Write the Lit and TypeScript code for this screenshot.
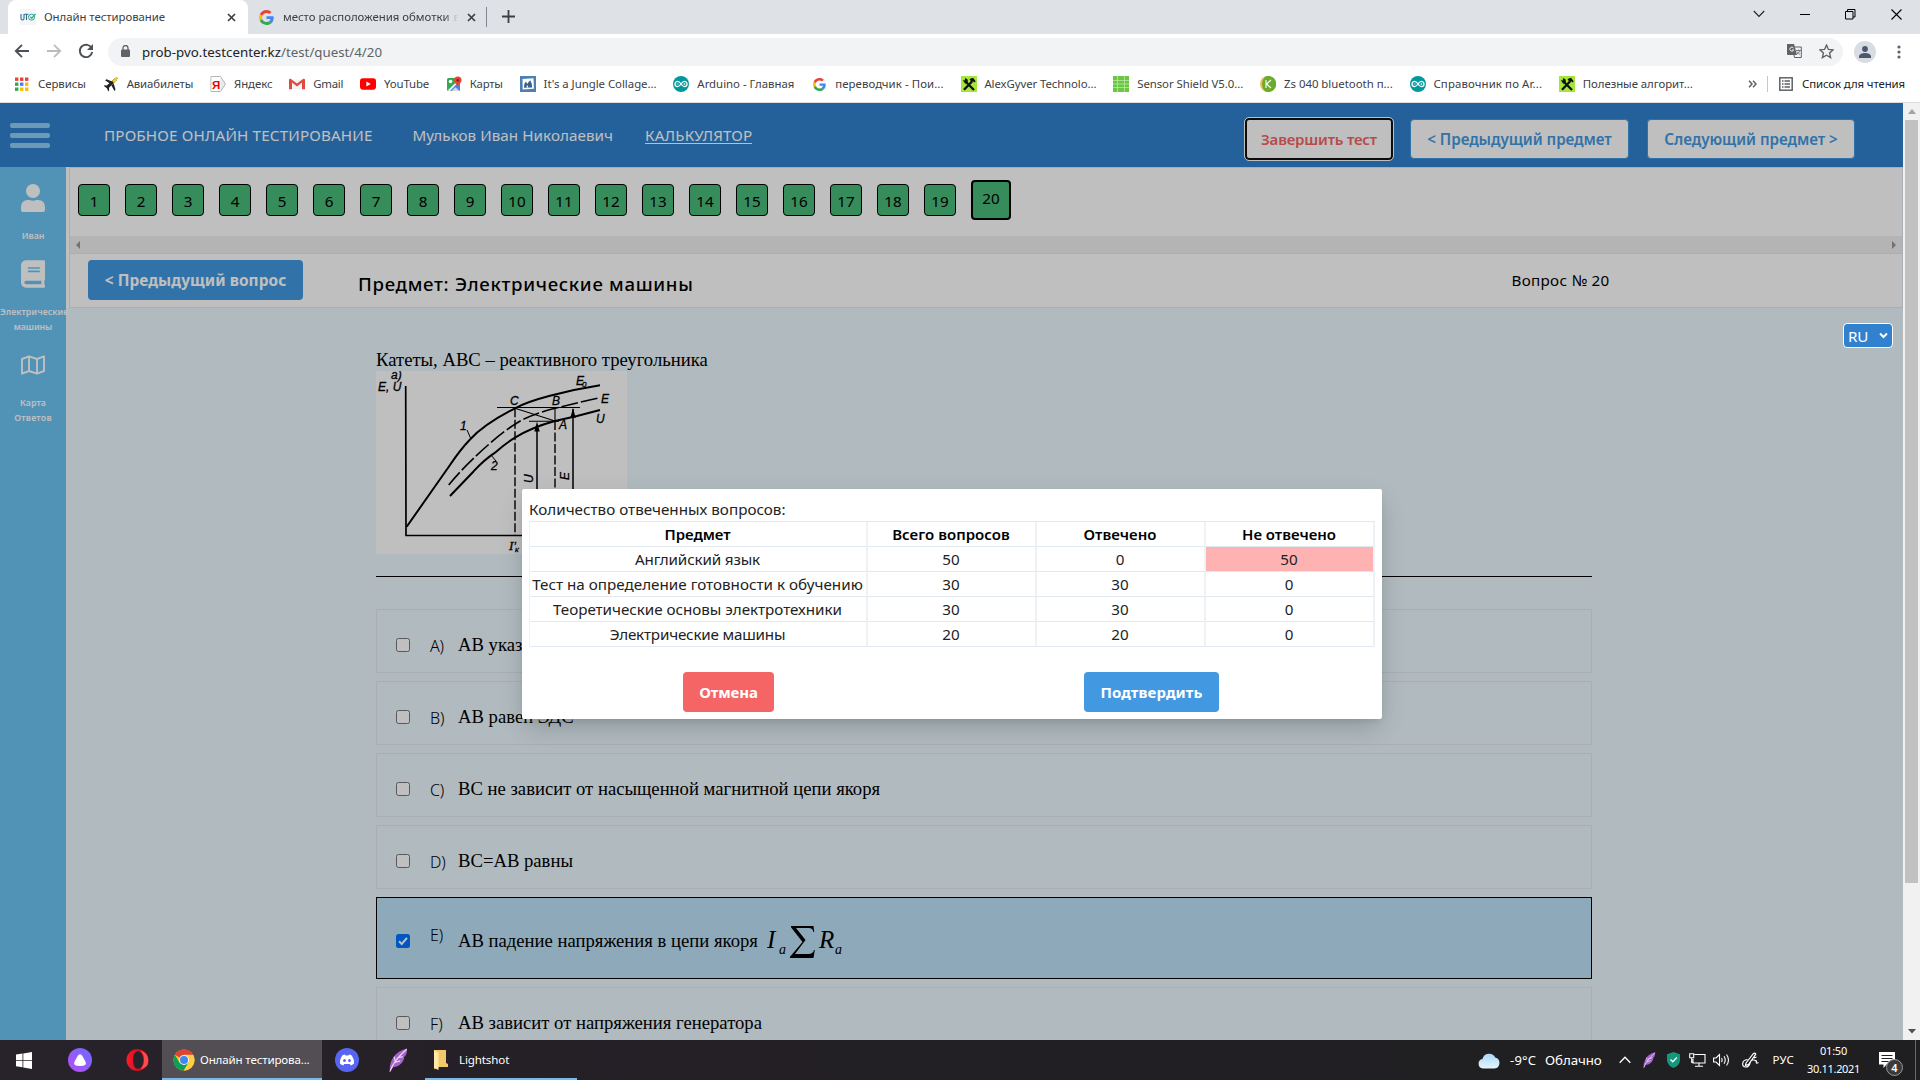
import { LitElement, html, css, svg, nothing } from 'lit';
import { customElement } from 'lit/decorators.js';

const UI_FONT = '"Noto Sans"';
const pen = document.createElement('canvas').getContext('2d')!;

/** Sets a line of text to an exact width by spreading the difference over its letters. */
const fit = (text: string, width: number, size: number, weight = 400) => {
  pen.font = `${weight} ${size}px ${UI_FONT}`;
  const ls = (width - pen.measureText(text).width) / text.length;
  return html`<span
    style="display:inline-block;white-space:pre;flex:none;font-size:${size}px;font-weight:${weight};width:${width}px;letter-spacing:${ls.toFixed(3)}px"
    >${text}</span
  >`;
};

const icon = (w: number, h: number, vb: string, body: unknown) =>
  html`<svg width=${w} height=${h} viewBox=${vb} style="display:block;flex:none">${body}</svg>`;

const google = (s = 16) =>
  icon(s, s, '0 0 48 48', svg`
    <path fill="#EA4335" d="M24 9.5c3.54 0 6.71 1.22 9.21 3.6l6.85-6.85C35.9 2.38 30.47 0 24 0 14.62 0 6.51 5.38 2.56 13.22l7.98 6.19C12.43 13.72 17.74 9.5 24 9.5z"/>
    <path fill="#4285F4" d="M46.98 24.55c0-1.57-.15-3.09-.38-4.55H24v9.02h12.94c-.58 2.96-2.26 5.48-4.78 7.18l7.73 6c4.51-4.18 7.09-10.36 7.09-17.65z"/>
    <path fill="#FBBC05" d="M10.53 28.59c-.48-1.45-.76-2.99-.76-4.59s.27-3.14.76-4.59l-7.98-6.19C.92 16.46 0 20.12 0 24c0 3.88.92 7.54 2.56 10.78l7.97-6.19z"/>
    <path fill="#34A853" d="M24 48c6.48 0 11.93-2.13 15.89-5.81l-7.73-6c-2.15 1.45-4.92 2.3-8.16 2.3-6.26 0-11.57-4.22-13.47-9.91l-7.98 6.19C6.51 42.62 14.62 48 24 48z"/>`);

const icons: Record<string, () => unknown> = {
  apps: () => icon(16, 16, '0 0 16 16', svg`
    ${[['#ea4335', '#ea4335', '#ea4335'], ['#34a853', '#4285f4', '#fbbc05'], ['#34a853', '#fbbc05', '#fbbc05']].map((r, y) =>
      r.map((c, x) => svg`<rect x=${1 + x * 5} y=${1.5 + y * 5} width="3.4" height="3.4" fill=${c}></rect>`))}`),
  plane: () => icon(16, 16, '0 0 16 16', svg`
    <path d="M2 4.2l1.6-.9L9 5.5l-2 2zM8.4 9.5l2.2-2.2 1.9 6.3-1 1.3z" fill="#222"/>
    <path d="M1.2 9.2l2.6.3L11.6 2.5q2-1.4 2.6-.8.7.7-.6 2.6L6 11.8l.2 2.8-1 .6-1.3-2.9-2.7-2.1z" fill="#222"/>
    <path d="M9 5L11.8 2.4q1.8-1.2 2.4-.7.6.6-.6 2.4L11 6.9z" fill="#fdd216"/>`),
  yandex: () => icon(16, 16, '0 0 16 16', svg`
    <path d="M1 .5h9.500l5 7.5-5 7.500H1z" fill="#e9e9e9" stroke="#b5b5b5"/><rect x="1.5" y="1" width="9" height="14" fill="#fff"/>
    <text x="2" y="12.5" font-family="Liberation Sans" font-weight="700" font-size="11.5" fill="#e00">Я</text>`),
  gmail: () => icon(16, 16, '0 0 16 16', svg`
    <path d="M1 3.5h14v9.5H1z" fill="#f3f3f3"/><path d="M0 4v9.3h3V6.5l5 4 5-4v6.8h3V4q0-1.6-1.6-1.3L8 7.5 1.6 2.7Q0 2.4 0 4z" fill="#dd4b3e"/>`),
  youtube: () => icon(16, 16, '0 0 17 16', svg`
    <rect x="0" y="2" width="17" height="12" rx="3" fill="#f00"/><path d="M6.8 5.4L11.4 8l-4.6 2.6z" fill="#fff"/>`),
  maps: () => icon(16, 16, '0 0 16 16', svg`
    <rect x="1" y="2" width="13" height="13" rx="1.5" fill="#34a853"/><path d="M3 15L13.9 5v8.5q0 1.5-1.5 1.5z" fill="#4285f4"/>
    <path d="M1.5 14.5L13 3.5l1 1L4 15z" fill="#f4f4f4"/><path d="M5.5 15l4-3.7 4 3.7z" fill="#dadada"/>
    <circle cx="4.5" cy="5.5" r="1.8" fill="#fff"/>
    <path d="M11.8.5a3.7 3.7 0 0 1 3.7 3.7c0 2.5-2.6 3.6-3.7 6.8-1.1-3.2-3.7-4.3-3.7-6.8A3.7 3.7 0 0 1 11.8.5z" fill="#ea4335"/><circle cx="11.8" cy="4.2" r="1.3" fill="#8e1b12"/>`),
  jungle: () => icon(16, 16, '0 0 16 16', svg`
    <rect width="16" height="16" fill="#4c7fb5"/><path d="M2.5 3l11-.7.4 10.5-11.2.8z" fill="#fff"/>
    <path d="M4 11.8l.4-4L6 5.5l1.2 2.6L8.6 6l1.6-1.8 1.6 3.6.3 3.7z" fill="#3a5f8e"/><path d="M6.5 11.6l.4-2.2h1l.3 2.1z" fill="#fff"/>`),
  arduino: () => icon(16, 16, '0 0 16 16', svg`
    <circle cx="8" cy="8" r="8" fill="#00979d"/><path d="M8 8C6.6 5.9 5.8 5.4 4.6 5.4a2.6 2.6 0 0 0 0 5.2C5.8 10.6 6.6 10 8 8zm0 0c1.4-2.1 2.2-2.6 3.4-2.6a2.6 2.6 0 0 1 0 5.2C10.200 10.600 9.400 10 8 8z" fill="none" stroke="#fff" stroke-width="1.3"/>
    <path d="M3.700 8h1.800M10.500 8h1.800M11.400 7.100v1.800" stroke="#fff" stroke-width=".7"/>`),
  google: () => html`<div class="ic16">${google(13)}</div>`,
  alex: () => icon(16, 16, '0 0 16 16', svg`
    <rect width="16" height="16" fill="#a4e73a"/><path d="M4.500 5.500L13 14M11.200 5.200L3 13.800" stroke="#111" stroke-width="2.300"/>
    <path d="M1.700 4l2.100.500.300-2.500 2.500 1.500.300 2.800-2.700 1.500zM8.500 3l3.500-1.200 2.700 3.500-1.500 1.200-1-1.200-1.700 1z" fill="#111"/>`),
  sensor: () => icon(16, 16, '0 0 16 16', svg`
    <rect width="16" height="16" fill="#6cc644"/><path d="M0 4.500h16M0 8h16M0 11.500h16M4.500 0v16M11.500 0v16" stroke="#b9eaa0" stroke-width=".8"/>`),
  ki: () => icon(16, 16, '0 0 16 16', svg`
    <circle cx="8" cy="8" r="8" fill="#f0b95c"/><path d="M5 .700A8 8 0 1 1 5 15.300Q2 12 2 8T5 .700z" fill="#6aac2c"/>
    <path d="M6 4v8M11 4L6.600 8 11 12" fill="none" stroke="#fff" stroke-width="1.100"/>`),
};

const bookmarks: [string, string, number][] = [
  ['apps', 'Сервисы', 48], ['plane', 'Авиабилеты', 66.5], ['yandex', 'Яндекс', 38.5], ['gmail', 'Gmail', 30],
  ['youtube', 'YouTube', 45], ['maps', 'Карты', 33], ['jungle', "It's a Jungle Collage...", 113],
  ['arduino', 'Arduino - Главная', 97], ['google', 'переводчик - Пои...', 108.5], ['alex', 'AlexGyver Technolo...', 112],
  ['sensor', 'Sensor Shield V5.0...', 106], ['ki', 'Zs 040 bluetooth п...', 108.7], ['arduino', 'Справочник по Ar...', 108.6],
  ['alex', 'Полезные алгорит...', 110],
];

const subjects: [string, number, number, number, number][] = [
  ['Английский язык', 125, 50, 0, 50],
  ['Тест на определение готовности к обучению', 330.6, 30, 30, 0],
  ['Теоретические основы электротехники', 289, 30, 30, 0],
  ['Электрические машины', 175.6, 20, 20, 0],
];

const answers: [string, string][] = [
  ['A', 'АВ указ'], ['B', 'АВ равен ЭДС'], ['C', 'ВС не зависит от насыщенной магнитной цепи якоря'],
  ['D', 'BC=AB равны'], ['E', 'АВ падение напряжения в цепи якоря'], ['F', 'АВ зависит от напряжения генератора'],
];

const feather = (w: number, h: number) => icon(w, h, '0 0 22 28', svg`
  <path d="M21 .500Q9 3 3.500 13 0 20 1 27.500 3 24.500 5 22.500 13 22 16.500 15 18 12 17.500 10.500L19.500 8.500Q21.500 4 21 .500z" fill="#a463c8"/>
  <path d="M1 27.500Q5 15 20.500 1.500M6 17l7-2M9 12l7-2M7 15l-1-5" stroke="#ecd3f6" stroke-width="1.400" fill="none"/>`);

@customElement('browser-chrome')
class BrowserChrome extends LitElement {
  static styles = css`
    :host { display: block; font-family: "Noto Sans", sans-serif; color: #3c4043; }
    .tabs { height: 34px; background: #dee1e6; display: flex; padding-left: 8px; }
    .tab { display: flex; align-items: center; box-sizing: border-box; line-height: 20px; }
    .on { width: 240px; background: #fff; border-radius: 8px 8px 0 0; padding: 0 12px 0 12px; gap: 8px; }
    .off { width: 239px; padding: 0 9px 0 11px; gap: 9px; border-right: 1px solid #80868b; height: 20px; margin-top: 7px; }
    .grow { flex: 1; }
    .clip { width: 175px; overflow: hidden; white-space: nowrap; display: flex; gap: 4px; -webkit-mask-image: linear-gradient(90deg, #000 92%, transparent); }
    .v { font-size: 11.4px; }
    .plus { margin: 10px 0 0 15px; }
    .win { display: flex; align-items: center; gap: 35px; padding: 0 18px 6px 0; }
    .bar { height: 32px; background: #fff; display: flex; align-items: center; padding-left: 14px; box-sizing: border-box; padding-top: 1px; }
    .nav { display: flex; gap: 16px; width: 94px; flex: none; }
    .omni { flex: 1; height: 28px; border-radius: 14px; background: #f1f3f4; display: flex; align-items: center; padding: 0 9px 2px 13px; margin-top: 3px; line-height: 20px; box-sizing: border-box; }
    .url { margin-left: 12px; display: flex; }
    .host { color: #202124; }
    .path { color: #5f6368; }
    .gap { width: 17px; }
    .ava { width: 22px; height: 22px; border-radius: 50%; background: #d8dce3; margin: 2px 21px 0 11px; display: grid; place-items: center; }
    .dots { margin: 2px 19px 0 0; }
    .marks { height: 36px; background: #fff; display: flex; align-items: center; gap: 16.9px; padding: 0 15px 0 14px; line-height: 18px; border-bottom: 1px solid #dadce0; }
    .mark { display: flex; align-items: center; gap: 7.900px; flex: none; }
    .ic16 { width: 16px; display: grid; place-items: center; }
    .reading { display: flex; align-items: center; border-left: 1px solid #c6c8cb; height: 16px; padding-left: 11px; gap: 9px; margin-left: -7px; color: #202124; }
  `;
  render() {
    const cross = icon(9, 9, '0 0 9 9', svg`<path d="M1 1l7 7M8 1L1 8" stroke="#3c4043" stroke-width="1.700"/>`);
    return html`
      <div class="tabs">
        <div class="tab on">
          ${icon(16, 16, '0 0 16 16', svg`<rect width="16" height="16" fill="#f5f6f7"/><path d="M1 5v4.500q0 1.500 1.500 1.500t1.500-1.500V5M4.500 5.300h4M6.500 5.300V11" stroke="#2b6f96" stroke-width="1.100" fill="none"/><circle cx="11.500" cy="8.200" r="3" fill="none" stroke="#3a9aa0"/><path d="M10.300 7.800l1.400 1.500L15.500 5" stroke="#2fb86a" stroke-width="1.300" fill="none"/>`)}
          ${fit('Онлайн тестирование', 121, 11.4)}<div class="grow"></div>${cross}
        </div>
        <div class="tab off">
          ${google(15)}<div class="clip">${fit('место расположения обмотки', 166.5, 11.4)}<span class="v">в</span></div>${cross}
        </div>
        <div class="plus">${icon(13, 13, '0 0 13 13', svg`<path d="M6.500 0v13M0 6.500h13" stroke="#3c4043" stroke-width="1.800"/>`)}</div>
        <div class="grow"></div>
        <div class="win">
          ${icon(12, 8, '0 0 12 8', svg`<path d="M.800 1l5.200 5.500L11.200 1" fill="none" stroke="#222" stroke-width="1.100"/>`)}
          ${icon(10, 10, '0 0 10 10', svg`<path d="M0 5.500h10" stroke="#000"/>`)}
          ${icon(11, 11, '0 0 11 11', svg`<path d="M.500 2.500h7.500v7.500H.500zM2.500 2.500V.500H10v7.500H8" fill="none" stroke="#000"/>`)}
          ${icon(11, 11, '0 0 11 11', svg`<path d="M.500.500l10 10M10.500.500l-10 10" stroke="#000" stroke-width="1.100"/>`)}
        </div>
      </div>
      <div class="bar">
        <div class="nav">
          ${icon(16, 16, '0 0 16 16', svg`<path d="M15 8H2M8 1.800L1.800 8 8 14.200" fill="none" stroke="#4d5156" stroke-width="1.900"/>`)}
          ${icon(16, 16, '0 0 16 16', svg`<path d="M1 8h13M8 1.800L14.200 8 8 14.200" fill="none" stroke="#babcbe" stroke-width="1.800"/>`)}
          ${icon(16, 16, '0 0 16 16', svg`<path d="M13.800 5.500A6.200 6.200 0 1 0 14.200 9" fill="none" stroke="#4d5156" stroke-width="1.900"/><path d="M15 1v6H9z" fill="#4d5156"/>`)}
        </div>
        <div class="omni">
          ${icon(9, 12, '0 0 9 12', svg`<rect y="4.500" width="9" height="7.500" rx="1" fill="#5f6368"/><path d="M2 5V3a2.500 2.500 0 0 1 5 0v2" fill="none" stroke="#5f6368" stroke-width="1.300"/>`)}
          <div class="url"><span class="host">${fit('prob-pvo.testcenter.kz', 139, 13.3)}</span><span class="path">${fit('/test/quest/4/20', 101, 13.3)}</span></div>
          <div class="grow"></div>
          ${icon(15, 14, '0 0 15 14', svg`<path d="M5.500 3h8.800v10.500H7.500z" fill="#f1f3f4" stroke="#5f6368"/><path d="M0 0h7l3 11H1q-1 0-1-1z" fill="#5f6368"/><path d="M6.500 4A2 2 0 1 0 6.700 6H5" stroke="#fff" fill="none" stroke-width=".9"/><path d="M9 6.500h5M11.500 5.500v1M13 6.500Q12 9 10 10M10 7.500q1 2 3 3" stroke="#5f6368" fill="none" stroke-width=".8"/>`)}
          <span class="gap"></span>
          ${icon(15, 15, '0 0 24 24', svg`<path d="M12 1.800l3.100 6.900 7.500.700-5.700 5 1.700 7.400L12 17.900l-6.600 3.900 1.700-7.400-5.700-5 7.500-.700z" fill="none" stroke="#5f6368" stroke-width="2.200"/>`)}
        </div>
        <div class="ava">${icon(12, 12, '0 0 12 12', svg`<circle cx="6" cy="3" r="2.900" fill="#4b5670"/><path d="M0 12V10q1-3 6-3t6 3v2z" fill="#4b5670"/>`)}</div>
        <div class="dots">${icon(4, 14, '0 0 4 14', svg`<circle cx="2" cy="2" r="1.600" fill="#5f6368"/><circle cx="2" cy="7" r="1.600" fill="#5f6368"/><circle cx="2" cy="12" r="1.600" fill="#5f6368"/>`)}</div>
      </div>
      <div class="marks">
        ${bookmarks.map(([i, t, w]) => html`<div class="mark">${icons[i]()}${fit(t, w, 11.4)}</div>`)}
        <div class="grow"></div>
        ${icon(9, 8, '0 0 9 8', svg`<path d="M1 .800L4 4 1 7.200M5 .800L8 4 5 7.200" fill="none" stroke="#5f6368" stroke-width="1.500"/>`)}
        <div class="reading">
          ${icon(14, 14, '0 0 14 14', svg`<rect x=".8" y=".8" width="12.400" height="12.400" fill="none" stroke="#5f6368" stroke-width="1.500"/><path d="M3 4h1.500M3 7h1.500M3 10h1.500M5.500 4H11M5.500 7H11M5.500 10H11" stroke="#5f6368" stroke-width="1.300"/>`)}
          ${fit('Список для чтения', 103, 11.4)}
        </div>
      </div>`;
  }
}

@customElement('saturation-chart')
class SaturationChart extends LitElement {
  static styles = css`
    :host { display: block; width: 251px; height: 183px; background: #fff; }
    svg { display: block; }
    text { font-family: "Liberation Sans", sans-serif; font-style: italic; font-size: 12px; fill: #000; stroke: #000; stroke-width: 0.3; }
    .sub { font-size: 8px; }
    .ser { font-family: "Liberation Serif", serif; font-size: 13px; }
  `;
  render() {
    return html`<svg width="251" height="183" viewBox="0 0 251 183" fill="none" stroke="#000">
      <path d="M29.700 15L30 164.500H251" stroke-width="1.700"/>
      <path d="M30.700 155.700L54 122.500 74 94Q84 79 94 68.500 108 53 139 37.300 150 31 174 24.700T224 14.300" stroke-width="2"/>
      <path d="M72.700 114Q90 93 114 72.300 128 60 139 53.300 152 44 179 37.300T224 26.700" stroke-width="1.600" stroke-dasharray="17 3"/>
      <path d="M74 125L97.300 100.700Q108 89 119 81.700 130 72 139 66.700 155 56.500 179 50L201 45T224 39" stroke-width="2"/>
      <path d="M121 36.500H204M139 37.300L179 50M153 50.300H183M179 37.300V50" stroke-width="1.100"/>
      <path d="M139 37.300V165M179 50V165" stroke-width="1.400" stroke-dasharray="9 2.500"/>
      <path d="M161 54V165M197 38V165" stroke-width="1.500"/>
      <path d="M161 50.500l-2.700 10h5.400zM197 37l-2.700 10h5.400z" fill="#000" stroke="none"/>
      <path d="M91 59l4 9M115 84l5 6" stroke-width="1"/>
      <text x="15" y="8">а)</text><text x="2" y="20">E, U</text>
      <text x="84" y="59">1</text><text x="115" y="99">2</text>
      <text x="134" y="34">C</text><text x="176" y="34">B</text><text x="183" y="58">A</text>
      <text x="200" y="14">E</text><text class="sub" x="206" y="16">0</text><text x="225" y="32">E</text><text x="220" y="52">U</text>
      <text transform="translate(157 112) rotate(-90)">U</text><text transform="translate(193 109) rotate(-90)">E</text>
      <text class="ser" x="133" y="179">I'</text><text class="sub" x="139" y="181">к</text>
    </svg>`;
  }
}

@customElement('test-page')
class TestPage extends LitElement {
  static styles = css`
    :host { display: flex; height: 937px; overflow: hidden; font-family: "Noto Sans", sans-serif; color: #000; }
    .view { position: relative; width: 1903px; background: #ebf8ff; overflow: hidden; }
    .head { height: 64px; background: #3182ce; color: #fff; display: flex; align-items: center; padding: 0 48px 0 10px; box-sizing: border-box; line-height: 24px; }
    .burger { display: grid; gap: 5px; width: 40px; margin: 1px 54px 0 0; }
    .burger i { height: 5px; border-radius: 2px; background: #90cdf4; }
    .who { margin: 0 32px 0 40px; }
    .calc { background: linear-gradient(#fff, #fff) 0 20px / 100% 1px no-repeat; }
    .grow { flex: 1; }
    .hb { height: 40px; box-sizing: border-box; margin: 8px 0 0 18px; background: #fff; color: #4299e1; border-radius: 4px; border: 1px solid #4299e1; display: grid; place-items: center; }
    .end { width: 148px; color: #f56565; border: 0; outline: 1px solid #fff; box-shadow: inset 0 0 0 2px #101010; height: 42px; margin-right: -1px; }
    .pv { width: 219px; }
    .nx { width: 208px; }
    .body { display: flex; height: 873px; }
    .side { width: 66px; background: #6cc3f5; color: #fff; flex: none; padding-top: 17px; box-sizing: border-box; }
    .item { display: flex; flex-direction: column; align-items: center; line-height: 15px; margin-bottom: 16px; gap: 17px; font-size: 8.800px; }
    .lab { display: flex; flex-direction: column; align-items: center; width: 66px; white-space: nowrap; }
    .wide { width: 68.400px; align-self: flex-start; }
    .nudge { margin-right: 2.400px; display: flex; }
    .box28 { height: 28px; display: grid; place-items: center; }
    .main { flex: 1; min-width: 0; }
    .top { background: #fff; padding-left: 3px; }
    .panel { border: 1px solid #e2e8f0; height: 139px; }
    .nums { height: 68px; display: flex; align-items: flex-start; padding: 16px 0 0 8px; gap: 15px; box-sizing: border-box; }
    .n { width: 32px; height: 32px; box-sizing: border-box; border: 1px solid #000; border-radius: 4px; background: #48bb78; font-size: 15.2px; line-height: 32px; text-align: center; }
    .cur { width: 40px; height: 40px; border-width: 2px; margin-top: -4px; line-height: 32px; }
    .hs { height: 17px; background: #f1f1f1; display: flex; justify-content: space-between; align-items: center; padding: 0 5px; border-bottom: 1px solid #e2e8f0; }
    .q { height: 53px; display: flex; align-items: flex-start; line-height: 24px; padding-left: 18px; }
    .prev { width: 215px; height: 40px; margin-top: 6px; padding-top: 2px; box-sizing: border-box; border-radius: 4px; background: #4299e1; color: #fff; display: grid; place-items: center; }
    .subj { margin: 18px 0 0 55px; }
    .num { margin: 14px 0 0 818px; }
    .lang { position: absolute; left: 1843px; top: 220px; width: 50px; height: 25px; box-sizing: border-box; border: 1px solid #fff; border-radius: 4px; background: #3182ce; color: #fff; display: flex; align-items: center; padding: 0 4px; justify-content: space-between; z-index: 2; line-height: 22px; }
    .content { width: 1216px; margin: 41px 0 0 310px; font: 18.67px/22px "Liberation Serif", serif; }
    .hr { height: 1px; background: #000; margin: 22px 0 32px; }
    .ans { height: 64px; box-sizing: border-box; border: 1px solid #e2e8f0; margin-bottom: 8px; display: flex; align-items: center; padding: 8px 0 0 19px; }
    .sel { height: 82px; border-color: #000; background: #bee3f8; padding-top: 5px; }
    .cb { width: 14px; height: 14px; box-sizing: border-box; border: 1px solid #767676; border-radius: 2.500px; background: #fff; }
    .cbon { background: #0075ff; border: 0; }
    .l { width: 28px; margin-left: 20px; font: 16px/24px "Noto Sans", sans-serif; font-weight: 300; letter-spacing: -.2px; padding-top: 1px; }
    .sel .l { padding: 0; margin-top: -11px; }
    .f { margin-left: 9px; }
    .f text { font-family: "Liberation Serif", serif; font-style: italic; font-size: 25px; }
    .f .s { font-size: 14px; }
    .shade { position: absolute; inset: 0; background: rgba(0, 0, 0, .25); }
    .modal { position: absolute; left: 522px; top: 386px; width: 860px; height: 230px; box-sizing: border-box; padding: 8px 7px; background: #fff; border-radius: 2px; box-shadow: 0 10px 25px -3px rgba(0, 0, 0, .2), 0 4px 6px -2px rgba(0, 0, 0, .08); color: #222; line-height: 24px; }
    .cap { height: 24px; display: flex; }
    .tbl { display: grid; grid-template-columns: 338px 169px 169px 169px; border-top: 1px solid #e2e8f0; border-left: 1px solid #edf2f7; }
    .c { height: 24px; border-bottom: 1px solid #e2e8f0; border-right: 2px solid #edf2f7; display: grid; place-items: center; font-size: 15.200px; line-height: 24px; padding-right: 1px; }
    .h { color: #000; }
    .bad { background: #feb2b2; }
    .btns { display: flex; margin-top: 25px; color: #fff; }
    .b { height: 40px; border-radius: 4px; display: grid; place-items: center; }
    .no { width: 91px; background: #f56565; margin-left: 154px; }
    .yes { width: 135px; background: #4299e1; margin-left: 310px; }
    .sb { width: 17px; background: #f1f1f1; display: flex; flex-direction: column; align-items: center; }
    .thumb { width: 13px; height: 763px; background: #c1c1c1; }
    .arr { height: 17px; display: grid; place-items: center; }
  `;
  render() {
    return html`
      <div class="view">
        <div class="head">
          <div class="burger"><i></i><i></i><i></i></div>
          ${fit('ПРОБНОЕ ОНЛАЙН ТЕСТИРОВАНИЕ', 268.5, 15.2)}
          <div class="who">${fit('Мульков Иван Николаевич', 200.5, 15.2)}</div>
          <div class="calc">${fit('КАЛЬКУЛЯТОР', 107.4, 15.2)}</div>
          <div class="grow"></div>
          <div class="hb end">${fit('Завершить тест', 116, 15, 600)}</div>
          <div class="hb pv">${fit('< Предыдущий предмет', 184.5, 15.2, 600)}</div>
          <div class="hb nx">${fit('Следующий предмет >', 173.5, 15.2, 600)}</div>
        </div>
        <div class="body">
          <div class="side">
            <div class="item">
              ${icon(24, 28, '0 0 24 28', svg`<circle cx="12" cy="7" r="7" fill="#fff"/><path d="M0 28v-4.500Q0 16 7 16h1.500q3.500 1.600 7 0H17q7 0 7 7.500V26q0 2-2 2H2q-2 0-2-2z" fill="#fff"/>`)}
              <div class="lab">${fit('Иван', 22.7, 8.8, 600)}</div>
            </div>
            <div class="item">
              ${icon(24, 28, '0 0 448 512', svg`<path fill="#fff" d="M448 360V24c0-13.300-10.700-24-24-24H96C43 0 0 43 0 96v320c0 53 43 96 96 96h328c13.300 0 24-10.700 24-24v-16c0-7.500-3.500-14.300-8.900-18.700-4.200-15.400-4.200-59.300 0-74.700 5.400-4.300 8.900-11.100 8.900-18.600zM128 134c0-3.300 2.700-6 6-6h212c3.300 0 6 2.700 6 6v20c0 3.300-2.700 6-6 6H134c-3.300 0-6-2.700-6-6v-20zm0 64c0-3.300 2.700-6 6-6h212c3.300 0 6 2.700 6 6v20c0 3.300-2.700 6-6 6H134c-3.300 0-6-2.700-6-6v-20zm253.400 250H96c-17.700 0-32-14.300-32-32 0-17.600 14.400-32 32-32h285.400c-1.900 17.100-1.900 46.900 0 64z"/>`)}
              <div class="lab wide">${fit('Электрические', 68.4, 8.8, 600)}<div class="nudge">${fit('машины', 38.3, 8.8, 600)}</div></div>
            </div>
            <div class="item">
              <div class="box28">${icon(24, 20, '0 0 24 20', svg`<path d="M1 4L8 1.300l8 2.700 7-2.700V16l-7 2.700L8 16l-7 2.700zM8 1.300V16M16 4v14.700" fill="none" stroke="#fff" stroke-width="1.900" stroke-linejoin="round"/>`)}</div>
              <div class="lab">${fit('Карта', 26, 8.8, 600)}${fit('Ответов', 37.7, 8.8, 600)}</div>
            </div>
          </div>
          <div class="main">
            <div class="top"><div class="panel">
              <div class="nums">${Array.from({ length: 20 }, (_, i) => html`<div class="n ${i === 19 ? 'cur' : ''}">${i + 1}</div>`)}</div>
              <div class="hs">
                ${icon(5, 8, '0 0 5 8', svg`<path d="M5 0v8L1 4z" fill="#999"/>`)}
                ${icon(5, 8, '0 0 5 8', svg`<path d="M0 0v8l4-4z" fill="#999"/>`)}
              </div>
              <div class="q">
                <div class="prev">${fit('< Предыдущий вопрос', 181.6, 15.4, 700)}</div>
                <div class="subj">${fit('Предмет: Электрические машины', 335.5, 18.6, 500)}</div>
                <div class="num">${fit('Вопрос № 20', 98, 15.2)}</div>
              </div>
            </div></div>
            <div class="content">
              <div>Катеты, ABC – реактивного треугольника</div>
              <saturation-chart></saturation-chart>
              <div class="hr"></div>
              ${answers.map(([l, t]) => {
                const on = l === 'E';
                return html`<div class="ans ${on ? 'sel' : ''}">
                  <div class="cb ${on ? 'cbon' : ''}">${on ? icon(14, 14, '0 0 14 14', svg`<path d="M3 7.300l2.700 2.700L11 3.800" fill="none" stroke="#fff" stroke-width="2"/>`) : nothing}</div>
                  <div class="l">${l})</div><div>${t}</div>
                  ${on ? html`<div class="f">${icon(76, 40, '0 0 76 40', svg`
                    <text x="0" y="27">I</text><text class="s" x="12" y="33">a</text>
                    <text x="52" y="27">R</text><text class="s" x="68" y="33">a</text>
                    <path d="M24 5h22.500l.700 6h-.800q-.700-4-4.500-4H29l9.500 12L28 33h13.500q4.500 0 5.500-4h.800L46.500 37H23v-1.200L35.500 21 24 6.300z" fill="#000"/>`)}</div>` : nothing}
                </div>`;
              })}
            </div>
          </div>
        </div>
        <div class="shade"></div>
        <div class="lang">${fit('RU', 20, 15.2)}${icon(9, 7, '0 0 9 7', svg`<path d="M1 1.500L4.500 5 8 1.500" fill="none" stroke="#fff" stroke-width="2"/>`)}</div>
        <div class="modal">
          <div class="cap">${fit('Количество отвеченных вопросов:', 256.5, 15.2)}</div>
          <div class="tbl">
            <div class="c h">${fit('Предмет', 66, 15, 600)}</div><div class="c h">${fit('Всего вопросов', 117.7, 15, 600)}</div>
            <div class="c h">${fit('Отвечено', 73, 15, 600)}</div><div class="c h">${fit('Не отвечено', 94, 15, 600)}</div>
            ${subjects.map(([s, w, a, b, c]) => html`<div class="c">${fit(s, w, 15.2)}</div><div class="c">${a}</div><div class="c">${b}</div><div class="c ${c ? 'bad' : ''}">${c}</div>`)}
          </div>
          <div class="btns">
            <div class="b no">${fit('Отмена', 58.5, 15, 700)}</div><div class="b yes">${fit('Подтвердить', 102, 15, 700)}</div>
          </div>
        </div>
      </div>
      <div class="sb">
        <div class="arr">${icon(8, 5, '0 0 8 5', svg`<path d="M0 5h8L4 0z" fill="#a3a3a3"/>`)}</div>
        <div class="thumb"></div><div class="grow"></div>
        <div class="arr">${icon(8, 5, '0 0 8 5', svg`<path d="M0 0h8L4 4.500z" fill="#505050"/>`)}</div>
      </div>`;
  }
}

@customElement('task-bar')
class TaskBar extends LitElement {
  static styles = css`
    :host { display: flex; height: 40px; background: linear-gradient(90deg, #28232a, #231f25 40%, #1f1f21); color: #fff; font-family: "Noto Sans", sans-serif; line-height: 18px; align-items: center; }
    .s { width: 57px; display: grid; place-items: center; flex: none; }
    .first { width: 48px; }
    .alice { width: 64px; }
    .w50 { width: 50px; }
    .w53 { width: 53px; }
    .app { height: 40px; box-sizing: border-box; display: flex; align-items: center; border-bottom: 2px solid #76b9ed; }
    .on { width: 160px; background: #524e54; padding: 2px 0 0 11px; gap: 5px; }
    .ls { width: 152px; padding: 2px 0 0 9px; gap: 11px; }
    .grow { flex: 1; }
    .tray { display: flex; align-items: center; }
    .temp { margin: 0 9px 0 10px; display: flex; }
    .caret { margin: 0 11px 0 17px; }
    .shield { margin: 0 9px 0 10px; }
    .snd { margin: 0 12px 0 7px; }
    .lng { margin: 0 13px 0 14px; display: flex; }
    .clock { display: flex; flex-direction: column; align-items: center; }
    .note { position: relative; margin-left: 19px; width: 36px; height: 40px; border-right: 1px solid #6a6a6c; margin-right: 4px; }
    .note > svg { margin-top: 12px; }
    .badge { position: absolute; left: 7px; top: 19px; width: 17px; height: 17px; box-sizing: border-box; border: 1px solid #999; border-radius: 50%; background: #3a3a3c; font-size: 11px; font-weight: 600; line-height: 15px; text-align: center; }
  `;
  render() {
    return html`
      <div class="s first">${icon(16, 17, '0 0 16 17', svg`<path d="M0 2.500l6.500-1V8H0zM7.300 1.400L16 0v8H7.300zM0 8.800h6.500v6.500l-6.500-1zM7.300 8.800H16V17l-8.700-1.400z" fill="#fff"/>`)}</div>
      <div class="s alice">${icon(24, 24, '0 0 24 24', svg`<defs><linearGradient id="a" x1="1" y1="0" x2="0" y2="1"><stop stop-color="#6a6cff"/><stop offset="1" stop-color="#b84df5"/></linearGradient></defs><circle cx="12" cy="12" r="12" fill="url(#a)"/><path d="M12 6.200q1.500 0 2.500 2l3 5.500q2 4.300-5.500 4.300t-5.500-4.300l3-5.500q1-2 2.500-2z" fill="#fff"/>`)}</div>
      <div class="s w50">${icon(23, 24, '0 0 23 24', svg`<defs><linearGradient id="o" x1="0" y1="0" x2="1" y2="0"><stop stop-color="#ff1b2d"/><stop offset="1" stop-color="#a70014"/></linearGradient></defs><path fill-rule="evenodd" d="M11.500 1a11 11 0 1 1 0 22 11 11 0 0 1 0-22zm.500 2.200C8.900 3.200 7 7 7 12s1.900 8.800 5 8.800 5.200-3.800 5.200-8.800S15.100 3.200 12 3.200z" fill="url(#o)"/><path d="M14 2.500Q22 4 22.400 12T14 21.500Q18 18 18 12T14 2.500z" fill="#ff4b4b"/>`)}</div>
      <div class="app on">
        ${icon(22, 22, '0 0 48 48', svg`<circle cx="24" cy="24" r="23" fill="#fbc116"/><path d="M24 24L4 12.500A23 23 0 0 1 44 12.500H24z" fill="#db4437"/><path d="M24 24l9.500 6L23.500 47A23 23 0 0 1 4 12.500L14.500 30z" fill="#0f9d58"/><path d="M24 13h20.200a23 23 0 0 1-20.700 34L34 30z" fill="#ffcd40"/><circle cx="24" cy="24" r="11" fill="#f1f1f1"/><circle cx="24" cy="24" r="8.800" fill="#4285f4"/>`)}
        ${fit('Онлайн тестирова...', 109.5, 11.6)}
      </div>
      <div class="s w50">${icon(24, 24, '0 0 24 24', svg`<circle cx="12" cy="12" r="12" fill="#5865f2"/><path d="M7.200 7.500Q9 6.500 10 6.500l.500 1h3l.500-1q1 0 2.800 1 2.700 4 2.200 8.300-1.800 1.300-3.300 1.600l-.800-1.400H9.100l-.800 1.400Q6.800 17.100 5 15.800 4.500 11.500 7.200 7.500z" fill="#fff"/><ellipse cx="9.500" cy="12.500" rx="1.400" ry="1.600" fill="#5865f2"/><ellipse cx="14.500" cy="12.500" rx="1.400" ry="1.600" fill="#5865f2"/>`)}</div>
      <div class="s w53">${feather(21, 24)}</div>
      <div class="app ls">
        ${icon(14, 20, '0 0 14 20', svg`<path d="M0 0h12v13l2 1v3H5l-5 2z" fill="#f2c969"/><path d="M0 0l4.500 3v17L0 18z" fill="#ffe9a6"/>`)}
        ${fit('Lightshot', 50.2, 11.6)}
      </div>
      <div class="grow"></div>
      <div class="tray">
        ${icon(22, 17, '0 0 22 17', svg`<defs><linearGradient id="c" x1="0" y1="0" x2="0" y2="1"><stop stop-color="#a9d8fa"/><stop offset="1" stop-color="#e6f4fe"/></linearGradient></defs><path d="M5 16.500a4.800 4.800 0 0 1-.500-9.500 6.800 6.800 0 0 1 12.700-1.500A5.600 5.600 0 0 1 16.500 16.500z" fill="url(#c)"/>`)}
        <div class="temp">${fit('-9°C', 26, 13)}</div>${fit('Облачно', 56.4, 13.3)}
        <div class="caret">${icon(12, 8, '0 0 12 8', svg`<path d="M.700 6.800L6 1.300l5.300 5.500" fill="none" stroke="#fff" stroke-width="1.300"/>`)}</div>
        ${feather(15, 16)}
        <div class="shield">${icon(13, 16, '0 0 13 16', svg`<path d="M6.500 0L13 2.300V8q0 5-6.500 8Q0 13 0 8V2.300z" fill="#13987e"/><path d="M3.500 7.500l2.300 2.300L9.800 5.500" fill="none" stroke="#fff" stroke-width="1.300"/>`)}</div>
        ${icon(17, 14, '0 0 17 14', svg`<path d="M5.500 1.500H16v8.500H4V6M6 13.200h8M10 10v3M.700.700h4v4h-4zM2.700 5v4.500H4" fill="none" stroke="#fff" stroke-width="1.100"/>`)}
        <div class="snd">${icon(17, 14, '0 0 17 14', svg`<path d="M.600 5h2.400L6.500 1.500v11L3 9H.600zM8.500 5q1.300 2 0 4M11 3.300q2.500 3.700 0 7.400M13.500 1.500q4 5.500 0 11" fill="none" stroke="#fff" stroke-width="1.100"/>`)}</div>
        ${icon(17, 16, '0 0 17 16', svg`<path d="M4 11L11.500 1.500q1.500-1 2.300.700L6.500 12.500l-3 .800zM5.500 7.500Q1 8 .700 11.500t3 3.500T8 11t4-3 2.500 1.500q-1 2.500 2 1M12 6l2.500-1" fill="none" stroke="#fff" stroke-width="1.200"/>`)}
        <div class="lng">${fit('РУС', 21.5, 11.4)}</div>
        <div class="clock">${fit('01:50', 27, 11)}${fit('30.11.2021', 53, 11)}</div>
        <div class="note">${icon(16, 16, '0 0 16 16', svg`<path d="M0 0h16v12.500H7.500L4.500 16v-3.500H0z" fill="#fff"/><path d="M2.500 3.500h11M2.500 6.500h11M2.500 9.500h7" stroke="#1f1f21"/>`)}<div class="badge">4</div></div>
      </div>`;
  }
}

@customElement('app-root')
class AppRoot extends LitElement {
  static styles = css`:host { display: block; width: 1920px; height: 1080px; overflow: hidden; background: #fff; }`;
  render() {
    return html`<browser-chrome></browser-chrome><test-page></test-page><task-bar></task-bar>`;
  }
}
